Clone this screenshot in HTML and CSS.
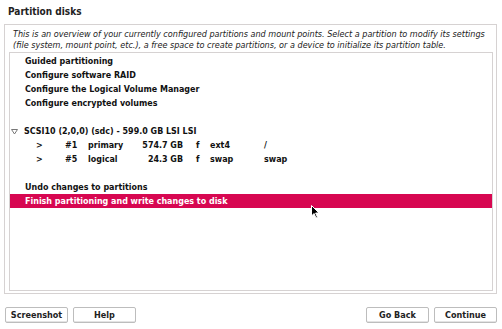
FILE: index.html
```html
<!DOCTYPE html>
<html>
<head>
<meta charset="utf-8">
<link rel="stylesheet" href="styles.css">
</head>
<body>
<div class="page">
  <h1 class="title">Partition disks</h1>
  <div class="panel">
    <p class="desc">This is an overview of your currently configured partitions and mount points. Select a partition to modify its settings<br>(file system, mount point, etc.), a free space to create partitions, or a device to initialize its partition table.</p>
    <div class="list">
      <div class="row item">Guided partitioning</div>
      <div class="row item">Configure software RAID</div>
      <div class="row item">Configure the Logical Volume Manager</div>
      <div class="row item">Configure encrypted volumes</div>
      <div class="row"></div>
      <div class="row disk"><svg class="tri" width="14" height="7" viewBox="0 0 14 7"><path d="M1.5 1.5 L7.5 1.5 L4.5 6 Z" fill="none" stroke="#777" stroke-width="1"/></svg>SCSI10 (2,0,0) (sdc) - 599.0 GB LSI LSI</div>
      <div class="row part"><span class="c-arrow">&gt;</span><span class="c-num">#1</span><span class="c-type">primary</span><span class="c-size">574.7 GB</span><span class="c-f">f</span><span class="c-fs">ext4</span><span class="c-mnt">/</span></div>
      <div class="row part"><span class="c-arrow">&gt;</span><span class="c-num">#5</span><span class="c-type">logical</span><span class="c-size">24.3 GB</span><span class="c-f">f</span><span class="c-fs">swap</span><span class="c-mnt">swap</span></div>
      <div class="row"></div>
      <div class="row item">Undo changes to partitions</div>
      <div class="row item selected">Finish partitioning and write changes to disk</div>
    </div>
  </div>
  <div class="buttons">
    <div class="group">
      <button class="btn btn-shot">Screenshot</button>
      <button class="btn btn-help">Help</button>
    </div>
    <div class="group">
      <button class="btn btn-back">Go Back</button>
      <button class="btn btn-cont">Continue</button>
    </div>
  </div>
  <svg class="cursor" width="9" height="14" viewBox="0 0 9 14"><path d="M0.5 0.5 L0.5 11 L3 8.5 L5 13 L6.5 12.3 L4.6 8 L8 8 Z" fill="#000" stroke="#fff" stroke-width="1"/></svg>
</div>
</body>
</html>
```
FILE: styles.css
```css
html, body {
  margin: 0;
  padding: 0;
  background: #fff;
}
.page {
  position: relative;
  width: 502px;
  height: 329px;
  font-family: "DejaVu Sans Condensed", "DejaVu Sans", sans-serif;
  color: #111;
  display: flex;
  flex-direction: column;
}
.title {
  margin: 0;
  padding: 6px 0 0 8px;
  height: 18px;
  font-size: 10px;
  font-weight: bold;
  line-height: 12px;
  color: #222;
}
.panel {
  margin: 0 5px 0 4px;
  height: 270px;
  box-sizing: border-box;
  border: 1px solid #d6d2d2;
  display: flex;
  flex-direction: column;
  padding: 0 3px 2px 4px;
}
.desc {
  margin: 0;
  padding: 4px 0 0 4px;
  height: 27px;
  box-sizing: border-box;
  font-family: "DejaVu Sans", sans-serif;
  font-style: italic;
  font-size: 8.1px;
  line-height: 11px;
  color: #222;
  white-space: nowrap;
}
.list {
  flex: 1;
  border: 1px solid #d6d2d2;
  padding-top: 1px;
}
.row {
  height: 14px;
  line-height: 14px;
  font-size: 8.9px;
  font-weight: bold;
  white-space: nowrap;
  color: #111;
}
.item {
  padding-left: 15px;
}
.selected {
  background: #d70751;
  color: #fff;
}
.disk {
  display: flex;
  align-items: center;
}
.tri {
  flex: none;
}
.part span {
  display: inline-block;
}
.c-arrow { margin-left: 26px; width: 29px; }
.c-num { width: 23px; }
.c-type { width: 45px; }
.c-size { width: 50px; text-align: right; }
.c-f { margin-left: 13px; width: 14px; }
.c-fs { width: 54px; }
.buttons {
  display: flex;
  justify-content: space-between;
  padding: 13px 5px 0 5px;
}
.group {
  display: flex;
  gap: 5px;
}
.btn {
  height: 16px;
  padding: 0;
  margin: 0;
  background: #fff;
  border: 1px solid #bdbdbd;
  border-radius: 2px;
  box-shadow: inset 0 -1px 0 #e4e4e4;
  font-family: "DejaVu Sans Condensed", "DejaVu Sans", sans-serif;
  font-size: 9px;
  font-weight: bold;
  color: #222;
  line-height: 14px;
}
.btn-shot { width: 63px; }
.btn-help { width: 63px; }
.btn-back { width: 63px; }
.btn-cont { width: 63px; }
.cursor {
  position: absolute;
  left: 311px;
  top: 205px;
}
```
